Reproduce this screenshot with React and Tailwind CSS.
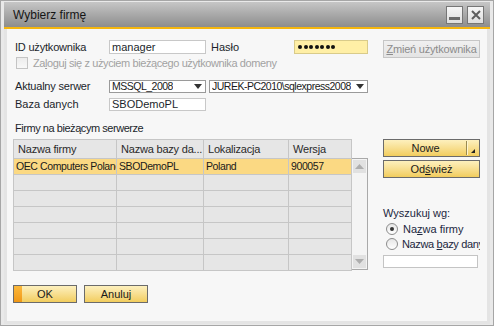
import React from "react";

const font = { fontFamily: '"Liberation Sans", Arial, sans-serif' };

function YellowButton({ children, className = "" }) {
  return (
    <div
      className={`relative flex h-[18px] items-center justify-center border border-[#6b6b6b] bg-gradient-to-b from-[#fdf0bd] to-[#f2cd5c] text-[11px] text-[#1a1a1a] ${className}`}
    >
      {children}
    </div>
  );
}

function Dropdown({ text, className = "" }) {
  return (
    <div
      className={`flex h-[13px] items-center justify-between gap-[2px] overflow-hidden border border-[#9a9a9a] bg-white pl-[2px] pr-[3px] text-[10.5px] leading-none text-[#1a1a1a] ${className}`}
    >
      <span className="overflow-hidden whitespace-nowrap tracking-[-0.5px]">{text}</span>
      <svg className="shrink-0" width="8" height="5" viewBox="0 0 8 5">
        <path d="M0 0 H8 L4 5 Z" fill="#333" />
      </svg>
    </div>
  );
}

function Radio({ checked }) {
  return (
    <div className="flex h-[12px] w-[12px] shrink-0 items-center justify-center rounded-full border border-[#8c8c8c] bg-gradient-to-b from-[#e6e6e6] to-white">
      {checked && <div className="h-[4px] w-[4px] rounded-full bg-[#333]" />}
    </div>
  );
}

const cols = ["Nazwa firmy", "Nazwa bazy da...", "Lokalizacja", "Wersja"];
const row = ["OEC Computers Poland", "SBODemoPL", "Poland", "900057"];

export default function App() {
  return (
    <div
      style={font}
      className="flex h-[326px] w-[494px] flex-col border border-[#a6a6a6] bg-[#e9e9e9] px-[3px] py-[1px]"
    >
      {/* Title bar */}
      <div className="flex h-[25px] shrink-0 items-center justify-between bg-gradient-to-b from-[#c6c6c6] to-[#8d8d8d] pl-[9px] pr-[6px]">
        <span className="text-[12px] text-[#151515]">Wybierz firmę</span>
        <div className="flex gap-[4px]">
          <div className="flex h-[18px] w-[17px] items-end justify-center border border-[#767676] bg-gradient-to-b from-[#f6f6f6] to-[#dedede] pb-[3px]">
            <div className="h-[3px] w-[11px] bg-[#6a6a6a]" />
          </div>
          <div className="flex h-[18px] w-[17px] items-center justify-center border border-[#767676] bg-gradient-to-b from-[#f6f6f6] to-[#dedede]">
            <svg width="10" height="10" viewBox="0 0 10 10">
              <path d="M1 1 L9 9 M9 1 L1 9" stroke="#5e5e5e" strokeWidth="2" />
            </svg>
          </div>
        </div>
      </div>
      <div className="h-[2px] shrink-0 bg-[#f5b60e]" />

      {/* Body */}
      <div className="flex flex-1 flex-col bg-[#e4e4e4] px-[3px] pb-[3px]">
        <div className="flex flex-1 bg-[#f7f7f7] pl-[6px] pt-[11px] text-[11px] text-[#1b1f2b]">
          {/* Left column */}
          <div className="flex w-[355px] flex-col">
            <div className="flex h-[14px] items-center">
              <span className="w-[96px] pl-[2px] tracking-[-0.2px]">ID użytkownika</span>
              <div className="flex h-[14px] w-[97px] items-center border border-[#c8c8c8] bg-white pl-[2px]">
                manager
              </div>
              <span className="ml-[3px] w-[85px] pl-[2px]">Hasło</span>
              <div className="flex h-[14px] w-[74px] items-center gap-[1.5px] border border-[#d9cb8a] bg-[#ffefa6] pl-[3px]">
                {[0, 1, 2, 3, 4, 5, 6].map((i) => (
                  <div key={i} className="h-[4px] w-[4px] rounded-full bg-[#111]" />
                ))}
              </div>
            </div>

            <div className="mt-[3px] flex h-[12px] items-center">
              <div className="ml-[3px] h-[12px] w-[12px] shrink-0 border border-[#c4c4c4] bg-gradient-to-b from-[#ececec] to-[#f8f8f8]" />
              <span className="ml-[5px] whitespace-nowrap tracking-[-0.4px] text-[#a2a2a2]">
                Za<span className="underline">l</span>oguj się z użyciem bieżącego użytkownika domeny
              </span>
            </div>

            <div className="mt-[11px] flex h-[13px] items-center">
              <span className="w-[96px] pl-[2px] tracking-[-0.2px]">Aktualny serwer</span>
              <Dropdown text="MSSQL_2008" className="w-[97px]" />
              <Dropdown text="JUREK-PC2010\sqlexpress2008" className="ml-[3px] w-[159px]" />
            </div>

            <div className="mt-[5px] flex h-[13px] items-center">
              <span className="w-[96px] pl-[2px]">Baza danych</span>
              <div className="flex h-[13px] w-[97px] items-center border border-[#c8c8c8] bg-white pl-[2px]">
                SBODemoPL
              </div>
            </div>

            <div className="mt-[11px] h-[12px] pl-[2px] leading-[12px] tracking-[-0.45px]">
              Firmy na bieżącym serwerze
            </div>

            {/* Table */}
            <div className="mt-[5px] flex">
              <div className="grid w-[339px] grid-cols-[103px_87px_85px_63px] border-l border-t border-[#c6c6c6] bg-[#e6e6e6] text-[#2a2a2a]">
                {cols.map((c) => (
                  <div
                    key={c}
                    className="flex h-[19px] items-center overflow-hidden whitespace-nowrap border-b border-r border-[#c6c6c6] pl-[4px] tracking-[-0.2px]"
                  >
                    {c}
                  </div>
                ))}
                {row.map((c) => (
                  <div
                    key={c}
                    className="flex h-[16px] items-center overflow-hidden whitespace-nowrap border-b border-r border-[#c6c6c6] bg-[#fbd983] pl-[2px] text-[10.5px] tracking-[-0.4px] text-[#1a1a1a]"
                  >
                    {c}
                  </div>
                ))}
                {Array.from({ length: 24 }).map((_, i) => (
                  <div key={i} className="h-[16px] border-b border-r border-[#c6c6c6]" />
                ))}
              </div>
              <div className="mt-[19px] flex h-[112px] w-[16px] flex-col justify-between border-b border-r border-t border-[#a9a9a9] bg-[#f4f4f4] p-[1px]">
                <div className="flex h-[13px] items-center justify-center bg-[#e1e1e1]">
                  <svg width="9" height="5" viewBox="0 0 9 5">
                    <path d="M0 5 H9 L4.5 0 Z" fill="#adadad" />
                  </svg>
                </div>
                <div className="flex h-[13px] items-center justify-center bg-[#e1e1e1]">
                  <svg width="9" height="5" viewBox="0 0 9 5">
                    <path d="M0 0 H9 L4.5 5 Z" fill="#adadad" />
                  </svg>
                </div>
              </div>
            </div>

            {/* Bottom buttons */}
            <div className="mt-[14px] flex gap-[7px]">
              <div className="relative flex h-[18px] w-[64px] border border-[#6b6b6b] bg-gradient-to-b from-[#fdf0bd] to-[#f2cd5c] text-[11px] text-[#1a1a1a]">
                <div className="h-full w-[8px] bg-gradient-to-b from-[#fbb83a] to-[#f09816]" />
                <div className="flex flex-1 items-center justify-center pr-[8px]">OK</div>
              </div>
              <YellowButton className="w-[64px]">Anuluj</YellowButton>
            </div>
          </div>

          {/* Right column */}
          <div className="ml-[15px] flex w-[97px] flex-col">
            <div className="flex h-[18px] items-center justify-center whitespace-nowrap border border-[#c6c6c6] bg-gradient-to-b from-[#f0f0f0] to-[#e4e4e4] tracking-[-0.2px] text-[#8c8c8c]">
              <span>
                <span className="underline">Z</span>mień użytkownika
              </span>
            </div>

            <YellowButton className="mt-[81px]">
              <span className="pr-[12px]">Nowe</span>
              <div className="absolute right-[11px] top-[1px] h-[14px] w-[2px] border-l border-r border-l-[#9a8a50] border-r-[#fff6d0]" />
              <svg className="absolute bottom-[3px] right-[4px]" width="4" height="4" viewBox="0 0 4 4">
                <path d="M4 0 V4 H0 Z" fill="#222" />
              </svg>
            </YellowButton>
            <YellowButton className="mt-[3px]">
              <span>
                Od<span className="underline">ś</span>wież
              </span>
            </YellowButton>

            <div className="mt-[29px] h-[12px] leading-[12px] text-[#1c2740]">Wyszukuj wg:</div>
            <div className="mt-[4px] flex h-[12px] items-center gap-[5px] pl-[3px] text-[#1c2740]">
              <Radio checked />
              <span>
                Na<span className="underline">z</span>wa firmy
              </span>
            </div>
            <div className="mt-[3px] flex h-[12px] items-center gap-[4px] overflow-hidden whitespace-nowrap pl-[3px] tracking-[-0.35px] text-[#1c2740]">
              <Radio />
              <span>
                Nazwa <span className="underline">b</span>azy danych
              </span>
            </div>
            <div className="mt-[5px] h-[13px] w-[95px] border border-[#c4c4c4] bg-white" />
          </div>
        </div>
      </div>
    </div>
  );
}
